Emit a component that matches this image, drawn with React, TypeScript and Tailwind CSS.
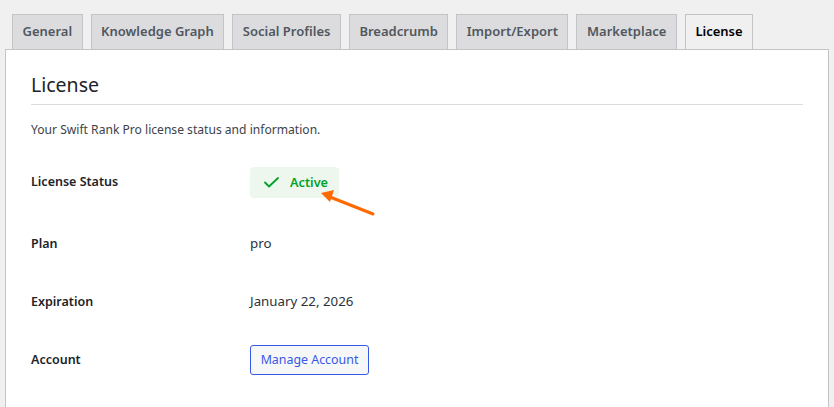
const TABS = ['General', 'Knowledge Graph', 'Social Profiles', 'Breadcrumb', 'Import/Export', 'Marketplace', 'License'];

function Row({ label, children, className = '' }: { label: string; children: React.ReactNode; className?: string }) {
  return (
    <div className={`flex items-center h-[58px] ${className}`}>
      <div className="w-[219px] shrink-0 text-[12.5px] font-semibold text-[#1d2327]">{label}</div>
      <div className="text-[13.3px] text-[#2c3338]">{children}</div>
    </div>
  );
}

export default function App() {
  return (
    <div className="w-[834px] h-[407px] overflow-hidden bg-[#f0f0f1] font-['Noto_Sans',sans-serif] relative">
      {/* tabs */}
      <div className="flex gap-[8px] pl-[12px] pt-[14px]">
        {TABS.map(t => {
          const active = t === 'License';
          return (
            <div
              key={t}
              className={`h-[35px] px-[9.5px] flex items-center border border-b-0 border-[#c3c4c7] text-[13px] font-semibold ${
                active ? 'bg-[#f0f0f1] text-[#000]' : 'bg-[#dcdcde] text-[#50575e]'
              }`}
            >
              {t}
            </div>
          );
        })}
      </div>

      {/* panel */}
      <div className="mx-[5px] bg-white border border-[#c3c4c7] h-[400px] px-[25px] pt-[20px]">
        <h2 className="text-[19.5px] leading-[29px] text-[#1d2327] pb-[5px] border-b border-[#dcdcde]">License</h2>
        <p className="mt-[15px] text-[12.1px] leading-[20px] text-[#3c434a]">
          Your Swift Rank Pro license status and information.
        </p>

        <div className="mt-[13px]">
          <Row label="License Status" className="mb-[4px]">
            <span className="inline-flex items-center gap-[11px] h-[31px] w-[89px] pl-[14px] rounded-[4px] bg-[#edf7ee] text-[#00a32a] text-[12.7px] font-semibold mt-[1px]">
              <svg width="15" height="11" viewBox="0 0 15 11" fill="none" stroke="#00a32a" strokeWidth="1.8" strokeLinecap="round" strokeLinejoin="round">
                <polyline points="1,5.5 5,9.5 14,1" />
              </svg>
              Active
            </span>
          </Row>
          <Row label="Plan">pro</Row>
          <Row label="Expiration">January 22, 2026</Row>
          <Row label="Account">
            <span className="inline-flex items-center justify-center h-[30px] w-[119px] rounded-[3px] border border-[#3858e9] bg-[#f6f7f7] text-[12.4px] text-[#3858e9]">
              Manage Account
            </span>
          </Row>
        </div>
      </div>

      {/* annotation arrow */}
      <svg className="absolute left-0 top-0 pointer-events-none" width="834" height="407">
        <line x1="373" y1="214" x2="330" y2="197" stroke="#ff6a00" strokeWidth="3" strokeLinecap="round" />
        <polygon points="321,193 334,190 330,202" fill="#ff6a00" />
      </svg>
    </div>
  );
}
